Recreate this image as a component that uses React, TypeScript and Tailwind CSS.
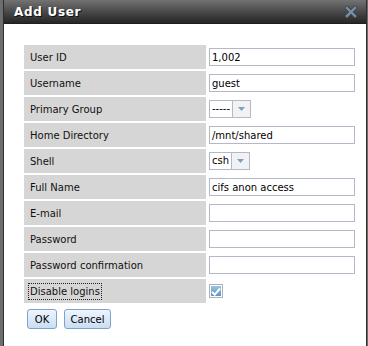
const rows = [
  { label: "User ID", kind: "text", value: "1,002" },
  { label: "Username", kind: "text", value: "guest" },
  { label: "Primary Group", kind: "select", value: "-----" },
  { label: "Home Directory", kind: "text", value: "/mnt/shared" },
  { label: "Shell", kind: "select", value: "csh" },
  { label: "Full Name", kind: "text", value: "cifs anon access" },
  { label: "E-mail", kind: "text", value: "" },
  { label: "Password", kind: "text", value: "" },
  { label: "Password confirmation", kind: "text", value: "" },
  { label: "Disable logins", kind: "check", value: "" },
]

function Select({ value }: { value: string }) {
  return (
    <div className="flex h-[18px] border border-[#b5b8c8] bg-white">
      <div className="flex items-center px-[2px] text-[10px] text-black leading-none">{value}</div>
      <div className="w-[18px] border-l border-[#b5b8c8] bg-[#f2f2f2] flex items-center justify-center">
        <svg width="7" height="4" viewBox="0 0 7 4">
          <path d="M0 0 H7 L3.5 4 Z" fill="#7d9fc4" />
        </svg>
      </div>
    </div>
  )
}

function Check() {
  return (
    <div className="w-[14px] h-[14px] border border-[#a9b0b8] p-px bg-white">
      <div className="w-full h-full bg-gradient-to-b from-[#9cc3e4] to-[#5d93c8] flex items-center justify-center">
        <svg width="10" height="9" viewBox="0 0 10 9">
          <path d="M1 5 L3.8 7.6 L9 1.5" stroke="white" strokeWidth="2" fill="none" />
        </svg>
      </div>
    </div>
  )
}

export default function App() {
  return (
    <div className="w-[368px] h-[346px] bg-[#6d6d6d] overflow-hidden font-['DejaVu_Sans',sans-serif]">
      <div className="ml-[3px] w-[364px] h-[346px] border-x border-[#2e2e2e] bg-white flex flex-col">
        <div className="h-[24px] shrink-0 flex items-center justify-between pl-[10px] pr-[9px] bg-gradient-to-b from-[#737373] via-[#4a4a4a] to-[#262626] border-b border-[#1e1e1e]">
          <span className="text-white font-bold text-[12px] tracking-[0.7px] [text-shadow:1px_1px_0_#111]">
            Add User
          </span>
          <svg width="12" height="12" viewBox="0 0 12 12">
            <path d="M2 2 L10 10 M10 2 L2 10" stroke="#39434d" strokeWidth="4.2" strokeLinecap="square" />
            <path d="M2 2 L10 10 M10 2 L2 10" stroke="#7b8fa5" strokeWidth="2.4" strokeLinecap="square" />
          </svg>
        </div>
        <div className="pl-[20px] pt-[21px] flex flex-col">
          <div className="flex flex-col gap-[2px]">
            {rows.map((row, i) => (
              <div key={i} className="flex gap-[2px] h-[24px]">
                <div className="w-[182px] bg-[#d6d6d6] flex items-center pl-[6px] text-[10px] text-[#111]">
                  {row.label === "Disable logins" ? (
                    <span className="outline outline-1 outline-dotted outline-[#222] -ml-px px-px">{row.label}</span>
                  ) : (
                    row.label
                  )}
                </div>
                <div className="flex items-center pl-px">
                  {row.kind === "text" && (
                    <div className="w-[146px] h-[18px] border border-[#b5b8c8] bg-white flex items-center px-[2px] text-[10px] text-black">
                      {row.value}
                    </div>
                  )}
                  {row.kind === "select" && <Select value={row.value} />}
                  {row.kind === "check" && <Check />}
                </div>
              </div>
            ))}
          </div>
          <div className="flex gap-[7px] pl-[3px] mt-[6px]">
            <button className="h-[20px] w-[30px] rounded-[3px] border border-[#7fa3c8] bg-gradient-to-b from-[#eef5fd] to-[#c9def3] text-[10px] text-black">
              OK
            </button>
            <button className="h-[20px] w-[47px] rounded-[3px] border border-[#7fa3c8] bg-gradient-to-b from-[#eef5fd] to-[#c9def3] text-[10px] text-black">
              Cancel
            </button>
          </div>
        </div>
      </div>
    </div>
  )
}
